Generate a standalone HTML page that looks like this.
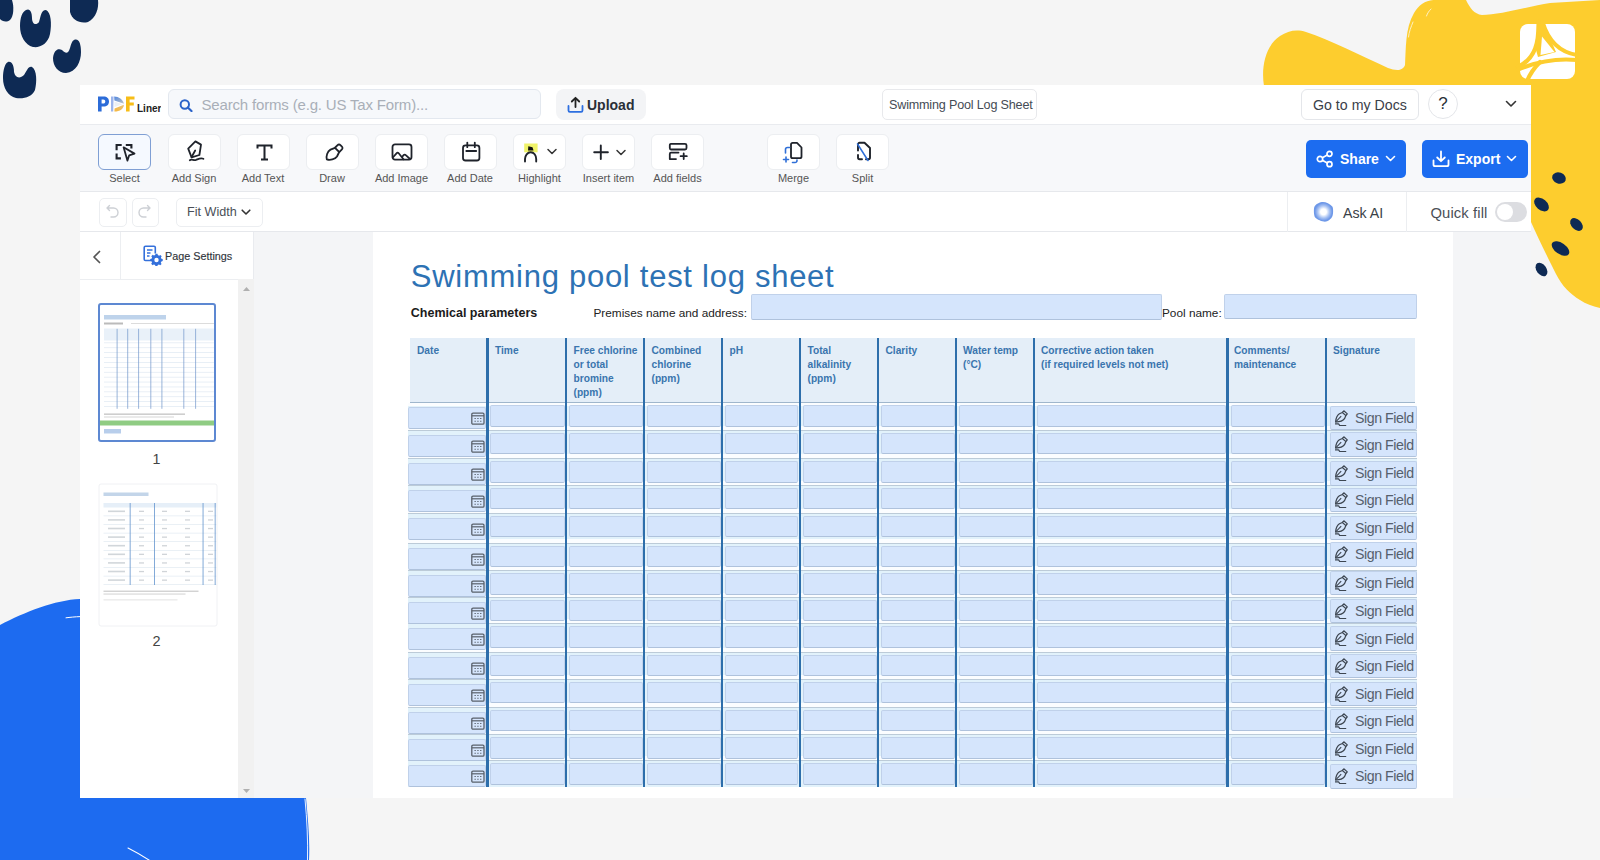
<!DOCTYPE html><html><head><meta charset="utf-8"><style>
*{box-sizing:border-box;margin:0;padding:0}
html,body{width:1600px;height:860px;overflow:hidden;background:#f5f5f5;font-family:"Liberation Sans",sans-serif;color:#333}
.abs{position:absolute}
#app{position:absolute;left:80px;top:85px;width:1451px;height:713px;background:#f4f5f7;overflow:hidden}
#hdr{position:absolute;left:0;top:0;width:1451px;height:40px;background:#fff;border-bottom:1px solid #e9ebef}
#tb{position:absolute;left:0;top:40px;width:1451px;height:67px;background:#f7f8fa;border-bottom:1px solid #e6e8ec}
#bar2{position:absolute;left:0;top:107px;width:1451px;height:40px;background:#fff;border-bottom:1px solid #e6e8ec}
#side{position:absolute;left:0;top:147px;width:174px;height:566px;background:#fff;border-right:1px solid #e9ebef}
#page{position:absolute;left:293px;top:147px;width:1080px;height:566px;background:#fff}
.btn svg{margin-top:-1px}
.btn{position:absolute;top:9px;width:53px;height:36px;background:#fff;border:1px solid #eceef1;border-radius:6px}
.pg{position:absolute;line-height:1;white-space:nowrap}
.fld{position:absolute;background:#d5e5fc;border:1px solid #c0d1ea;border-bottom-color:#afc2dc;border-radius:2px}
.hd{position:absolute;font-size:10.2px;font-weight:700;color:#3a75ae;line-height:14px;white-space:nowrap}
.lbl{position:absolute;top:47px;font-size:11px;color:#555;text-align:center;width:80px}
</style></head><body><svg class="abs" style="left:0;top:0" width="1600" height="860" viewBox="0 0 1600 860">
<g fill="#0e2a54">
<path d="M0 0 L12 0 C14 6 14 16 10 20 C6 23 2 21 0 19 Z"/>
<path d="M26 10 C30 8 32 12 32 18 C32 24 36 26 39 22 C41 16 41 10 46 10 C51 12 52 24 50 34 C48 44 40 48 33 47 C25 45 20 36 20 26 C20 18 22 12 26 10 Z"/>
<path d="M70 0 L98 0 C99 8 96 18 88 22 C80 24 72 20 70 12 Z"/>
<path d="M74 40 C79 38 81 44 81 52 C81 62 76 72 66 73 C58 73 53 66 53 58 C54 50 58 48 62 50 C66 54 68 54 70 48 C71 44 72 41 74 40 Z"/>
<path d="M8 62 C12 61 14 66 14 72 C15 78 20 79 24 75 C27 71 28 66 32 67 C37 70 37 82 35 90 C32 97 24 99 16 98 C8 96 3 88 3 78 C3 70 5 63 8 62 Z"/>
</g>
<path fill="#fdcd2e" d="M1264 86 C1261 68 1265 46 1280 36 C1288 31 1296 29 1306 32 C1330 40 1362 56 1388 68 C1396 71 1403 71 1405 65 C1406 50 1405 28 1414 13 C1420 3 1428 -1 1440 0 L1466 0 C1470 8 1474 14 1482 15 C1500 15 1530 6 1550 3 L1600 0 L1600 308 C1592 306 1586 304 1580 300 C1570 294 1562 286 1556 274 C1548 258 1538 238 1531 222 L1531 86 Z"/>
<rect x="1520" y="24" width="55" height="55" rx="8" fill="#fff"/>
<g fill="none" stroke="#fff8df" stroke-width="1" stroke-linecap="round" opacity="0.85"><path d="M1413 22 C1411 27 1409 32 1408.5 37"/><path d="M1431 9 C1429 11 1427.5 13 1426.5 16"/></g>
<g fill="none" stroke="#fdcd2e" stroke-width="4.2" stroke-linecap="round">
<path d="M1538.5 21 C1539 42 1536 58 1518 67"/>
<path d="M1542.5 22 C1548 40 1558 52 1577 55"/>
<path d="M1518 69.5 C1536 62 1556 58 1577 60"/>
<path d="M1540 62 C1534 68 1530 74 1527 81"/>
</g>
<path fill="#fdcd2e" d="M1537 24 L1544 24 L1556 52 L1538 57 L1536 50 Z"/>
<path fill="#fff" d="M1542 36.5 L1554.5 52 L1540.5 55 Z"/>
<g fill="#0e2a54">
<ellipse cx="1559" cy="178" rx="7" ry="5.5" transform="rotate(20 1559 178)"/>
<ellipse cx="1541.5" cy="204.5" rx="8.5" ry="5.5" transform="rotate(40 1541.5 204.5)"/>
<ellipse cx="1576.5" cy="224.5" rx="7.5" ry="5" transform="rotate(45 1576.5 224.5)"/>
<ellipse cx="1560.5" cy="248.5" rx="10" ry="5.5" transform="rotate(35 1560.5 248.5)"/>
<ellipse cx="1541.5" cy="269.5" rx="7.5" ry="5" transform="rotate(55 1541.5 269.5)"/>
</g>
<path fill="#1d6bf0" d="M0 625 C25 612 55 600 80 599 L80 798 L306 798 C308 820 310 840 309 860 L0 860 Z"/>
<g fill="none" stroke="#fff" stroke-linecap="round"><path d="M66 617.8 C70 617.3 75 616.8 80 616.6" stroke-width="1"/><path d="M305 799 C307 820 308 840 307.5 860" stroke-width="0.9"/><path d="M128 848 C138 853 146 858 152 862" stroke-width="1.1"/></g>
</svg>
<div id="app">
<div id="hdr">
<svg class="abs" style="left:17px;top:10px" width="64" height="20" viewBox="0 0 64 20">
<defs><linearGradient id="lgD1" x1="0" y1="0" x2="1" y2="1"><stop offset="0" stop-color="#4f86e0"/><stop offset="1" stop-color="#c2c6c4"/></linearGradient><linearGradient id="lgD2" x1="1" y1="0" x2="0" y2="1"><stop offset="0" stop-color="#e8c27a"/><stop offset="1" stop-color="#f6b73c"/></linearGradient></defs>
<path fill="#2c6cd8" d="M1 1.5 H6.5 C10 1.5 12 3.5 12 6.5 C12 9.5 10 11.5 6.5 11.5 H4.6 V16.5 H1 Z M4.6 4.5 V8.6 H6.2 C7.6 8.6 8.3 7.8 8.3 6.5 C8.3 5.3 7.6 4.5 6.2 4.5 Z"/>
<path fill="#9db5ec" d="M14 1.5 H16.6 L16.2 16.5 H14 Z"/>
<path fill="url(#lgD1)" d="M17.2 1.5 C22 1.8 25.5 4 27 8.8 L17.4 5.5 Z"/>
<path fill="#c9d3e0" d="M17.4 6.5 L25.5 9.2 L17.4 12 Z" opacity="0.35"/>
<path fill="url(#lgD2)" d="M17.4 16.6 L17.6 13.6 L26.9 9.8 C26.6 13.8 23 16.6 17.4 16.6 Z"/>
<path fill="#f7bd17" d="M29 1.5 H37.5 V4.5 H32.6 V7.6 H36.8 V10.5 H32.6 V16.5 H29 Z"/>
<text x="40" y="16.6" font-family="Liberation Sans" font-weight="700" font-size="10" fill="#222">Liner</text>
</svg>
<div class="abs" style="left:88px;top:4px;width:373px;height:30px;background:#f6f8fb;border:1px solid #e3e8ef;border-radius:6px"></div>
<svg class="abs" style="left:99px;top:14px" width="15" height="13" viewBox="0 0 15 13"><circle cx="5.8" cy="5.5" r="4.2" fill="none" stroke="#2a62c9" stroke-width="2"/><path d="M8.8 8.5 L12.5 12" stroke="#2a62c9" stroke-width="2.2" stroke-linecap="round"/></svg>
<div class="abs" style="left:121.5px;top:11px;font-size:15px;letter-spacing:-0.17px;color:#a9afb8;white-space:nowrap">Search forms (e.g. US Tax Form)...</div>
<div class="abs" style="left:476px;top:4px;width:90px;height:31px;background:#f3f4f6;border-radius:8px"></div>
<svg class="abs" style="left:487px;top:11px" width="17" height="17" viewBox="0 0 17 17"><path d="M8.5 11 V2 M4.8 5.5 L8.5 1.8 L12.2 5.5" fill="none" stroke="#222" stroke-width="1.8" stroke-linecap="round" stroke-linejoin="round"/><path d="M1.5 10 V14.5 C1.5 15.3 2 15.8 2.8 15.8 H14.2 C15 15.8 15.5 15.3 15.5 14.5 V10" fill="none" stroke="#2d6fe0" stroke-width="1.8" stroke-linecap="round"/></svg>
<div class="abs" style="left:507px;top:12px;font-size:14px;font-weight:700;color:#2a2f38;white-space:nowrap">Upload</div>
<div class="abs" style="left:802px;top:4px;width:155px;height:31px;background:#fff;border:1px solid #e8e9ec;border-radius:5px"></div>
<div class="abs" style="left:809px;top:13px;font-size:12.6px;letter-spacing:-0.18px;color:#454b54;white-space:nowrap">Swimming Pool Log Sheet</div>
<div class="abs" style="left:1221px;top:4px;width:118px;height:31px;background:#fff;border:1px solid #e4e6ea;border-radius:6px"></div>
<div class="abs" style="left:1233px;top:12px;font-size:14.2px;color:#3a4049;white-space:nowrap">Go to my Docs</div>
<div class="abs" style="left:1348px;top:4px;width:30px;height:30px;background:#fff;border:1px solid #e4e6ea;border-radius:50%"></div>
<div class="abs" style="left:1348px;top:9px;width:30px;text-align:center;font-size:17px;color:#2a2f38">?</div>
<svg class="abs" style="left:1425px;top:15px" width="12" height="8" viewBox="0 0 12 8"><path d="M1.5 1.5 L6 6 L10.5 1.5" fill="none" stroke="#333" stroke-width="1.6" stroke-linecap="round" stroke-linejoin="round"/></svg>
</div>
<div id="tb">
<div class="btn" style="left:18px;background:#f5f9ff;border:1px solid #7f9fd4"><svg class="abs" style="left:16px;top:9px" width="21" height="20" viewBox="0 0 21 20"><path d="M1.6 7.2 V2 H6.7 M10.8 2 H16.4 V5.6 M1.6 10.5 V15.4 H5.9" fill="none" stroke="#1f232b" stroke-width="2.1"/><path d="M8.6 4.3 L19.5 10.6 L14.2 12.3 L12.4 17.6 Z" fill="none" stroke="#1f232b" stroke-width="1.8" stroke-linecap="round" stroke-linejoin="round"/></div>
<div class="lbl" style="left:4.5px">Select</div>
<div class="btn" style="left:87.5px;"><svg class="abs" style="left:17px;top:6px" width="20" height="22" viewBox="0 0 20 22"><path d="M9.4 1.4 L15 4.6 L13.4 15 L5.6 17.4 L2.2 8.6 Z" fill="none" stroke="#1f232b" stroke-width="1.8" stroke-linecap="round" stroke-linejoin="round"/><path d="M5.6 17 L9.2 10.5" fill="none" stroke="#1f232b" stroke-width="1.8" stroke-linecap="round" stroke-linejoin="round"/><path d="M3.8 20.2 C6 18.6 7.5 21 10 20 C12.5 19 14.5 17.5 17.4 18.8" fill="none" stroke="#1f232b" stroke-width="1.8" stroke-linecap="round" stroke-linejoin="round"/></svg></div>
<div class="lbl" style="left:74.0px">Add Sign</div>
<div class="btn" style="left:156.5px;"><svg class="abs" style="left:18px;top:10px" width="17" height="17" viewBox="0 0 17 17"><path d="M1.5 4.5 V1.5 H15.5 V4.5 M8.5 1.5 V15.5 M5 15.5 H12" fill="none" stroke="#1f232b" stroke-width="2"/></svg></div>
<div class="lbl" style="left:143.0px">Add Text</div>
<div class="btn" style="left:225.5px;"><svg class="abs" style="left:17px;top:9px" width="20" height="19" viewBox="0 0 20 19"><path d="M11.2 4.5 L13.6 2.1 C14.4 1.3 15.6 1.3 16.4 2.1 L17.9 3.6 C18.7 4.4 18.7 5.6 17.9 6.4 L15.5 8.8" fill="none" stroke="#1f232b" stroke-width="1.8" stroke-linecap="round" stroke-linejoin="round"/><path d="M11 4.8 L15.2 9 L13 13.5 C11 16.5 6 17.5 2.8 16.4 C2 13.2 3.2 8.5 6.5 6.6 Z" fill="none" stroke="#1f232b" stroke-width="1.8" stroke-linecap="round" stroke-linejoin="round"/></svg></div>
<div class="lbl" style="left:212.0px">Draw</div>
<div class="btn" style="left:295px;"><svg class="abs" style="left:15px;top:9px" width="22" height="19" viewBox="0 0 22 19"><rect x="1.5" y="1.4" width="19" height="15.2" rx="2.5" fill="none" stroke="#1f232b" stroke-width="1.8" stroke-linecap="round" stroke-linejoin="round"/><path d="M1.8 14.5 L5.5 10.3 C6.2 9.5 7 9.5 7.7 10.3 L12.5 16.2 M11 14 L12.6 12.2 C13.3 11.4 14.1 11.4 14.8 12.2 L19 16" fill="none" stroke="#1f232b" stroke-width="1.8" stroke-linecap="round" stroke-linejoin="round"/></svg></div>
<div class="lbl" style="left:281.5px">Add Image</div>
<div class="btn" style="left:363.5px;"><svg class="abs" style="left:15px;top:6.3px" width="23" height="23" viewBox="0 0 23 23"><rect x="3" y="5.4" width="16.4" height="15.1" rx="2.5" fill="none" stroke="#1f232b" stroke-width="1.8" stroke-linecap="round" stroke-linejoin="round"/><path d="M6.3 11 H16.2 M7.3 2.6 V7.2 M14.8 2.6 V7.2" fill="none" stroke="#1f232b" stroke-width="1.8" stroke-linecap="round" stroke-linejoin="round"/></svg></div>
<div class="lbl" style="left:350.0px">Add Date</div>
<div class="btn" style="left:433px;"><svg class="abs" style="left:8px;top:8px" width="40" height="21" viewBox="0 0 40 21"><rect x="2.2" y="1.5" width="13.4" height="8.8" fill="#f0f36a"/><path d="M6 8.4 L6.3 4.3 L10.5 5.2 L11.5 8.4 Z" fill="#111"/><path d="M3 19.5 V17 C3 13.5 5.5 10.2 8.7 10.2 C12 10.2 14.2 13.5 14.2 17 V19.5" fill="none" stroke="#1f232b" stroke-width="1.9" stroke-linecap="round"/><path d="M26 7.5 L30 11.5 L34 7.5" fill="none" stroke="#333" stroke-width="1.5" stroke-linecap="round" stroke-linejoin="round"/></svg></div>
<div class="lbl" style="left:419.5px">Highlight</div>
<div class="btn" style="left:502px;"><svg class="abs" style="left:9px;top:9px" width="40" height="19" viewBox="0 0 40 19"><path d="M8.8 2.4 V16.1 M2.2 9.25 H15.9" fill="none" stroke="#1f232b" stroke-width="1.9" stroke-linecap="round"/><path d="M25 7.5 L29 11.5 L33 7.5" fill="none" stroke="#333" stroke-width="1.5" stroke-linecap="round" stroke-linejoin="round"/></svg></div>
<div class="lbl" style="left:488.5px">Insert item</div>
<div class="btn" style="left:571px;"><svg class="abs" style="left:16px;top:8px" width="21" height="20" viewBox="0 0 21 20"><path d="M3 1.8 H17 C18 1.8 18.5 2.3 18.5 3.3 V6 C18.5 7 18 7.5 17 7.5 H3 C2 7.5 1.8 7 1.8 6 V3.3 C1.8 2.3 2 1.8 3 1.8 Z" fill="none" stroke="#1f232b" stroke-width="1.8" stroke-linecap="round" stroke-linejoin="round"/><path d="M10.5 10.6 H3 C2 10.6 1.8 11.1 1.8 12.1 V17.1 H8" fill="none" stroke="#1f232b" stroke-width="1.8" stroke-linecap="round" stroke-linejoin="round"/><path d="M15.7 11.4 V17 M12.6 14.2 H18.8" fill="none" stroke="#1f232b" stroke-width="1.8" stroke-linecap="round" stroke-linejoin="round"/></svg></div>
<div class="lbl" style="left:557.5px">Add fields</div>
<div class="btn" style="left:687px;"><svg class="abs" style="left:12px;top:7px" width="24" height="24" viewBox="0 0 24 24"><path d="M11 3.5 C11 2.5 11.6 1.8 12.6 1.8 H17 L21.5 6.5 V15.5 C21.5 16.5 20.9 17.2 19.9 17.2 H12.6 C11.6 17.2 11 16.5 11 15.5 Z" fill="none" stroke="#1f232b" stroke-width="1.8" stroke-linejoin="round"/><path d="M9.5 6.5 H7.5 C6.5 6.5 5.5 7 5.5 8.5 V12 M12.5 21.5 H15 C16 21.5 17.2 21 17 19" fill="none" stroke="#2f6fd8" stroke-width="1.6" stroke-linecap="round"/><path d="M6 16 V21 M3.5 18.5 H8.5" fill="none" stroke="#2f6fd8" stroke-width="1.6" stroke-linecap="round"/></svg></div>
<div class="lbl" style="left:673.5px">Merge</div>
<div class="btn" style="left:756px;"><svg class="abs" style="left:16.5px;top:7px" width="20" height="24" viewBox="0 0 20 24"><path d="M4 9.5 V3.5 C4 2.5 4.6 1.8 5.6 1.8 H10.5 L16 7 V16.5 C16 17.5 15.4 18.2 14.4 18.2 H12 M8 18.2 H5.6 C4.6 18.2 4 17.5 4 16.5 V14" fill="none" stroke="#1f232b" stroke-width="1.9" stroke-linecap="round" stroke-linejoin="round"/><path d="M3.5 3 L14 19.5" fill="none" stroke="#2f6fd8" stroke-width="1.5" stroke-linecap="round"/></svg></div>
<div class="lbl" style="left:742.5px">Split</div>
<div class="abs" style="left:1226px;top:15px;width:100px;height:38px;background:#1c6cf0;border-radius:5px"></div>
<svg class="abs" style="left:1236px;top:25px" width="18" height="18" viewBox="0 0 18 18"><circle cx="4" cy="9" r="2.7" fill="none" stroke="#fff" stroke-width="1.7"/><circle cx="13.5" cy="3.8" r="2.5" fill="none" stroke="#fff" stroke-width="1.7"/><circle cx="13.5" cy="14.2" r="2.5" fill="none" stroke="#fff" stroke-width="1.7"/><path d="M6.3 7.7 L11.3 5 M6.3 10.3 L11.3 13" stroke="#fff" stroke-width="1.7"/></svg>
<div class="abs" style="left:1260px;top:26px;font-size:14px;font-weight:700;color:#fff;white-space:nowrap">Share</div>
<svg class="abs" style="left:1305px;top:30px" width="11" height="8" viewBox="0 0 11 8"><path d="M1.5 1.5 L5.5 5.5 L9.5 1.5" fill="none" stroke="#fff" stroke-width="1.6" stroke-linecap="round" stroke-linejoin="round"/></svg>
<div class="abs" style="left:1342px;top:15px;width:106px;height:38px;background:#1c6cf0;border-radius:5px"></div>
<svg class="abs" style="left:1352px;top:25px" width="18" height="18" viewBox="0 0 18 18"><path d="M9 1.5 V11 M5.2 7.5 L9 11.2 L12.8 7.5" fill="none" stroke="#fff" stroke-width="1.8" stroke-linecap="round" stroke-linejoin="round"/><path d="M1.5 10.5 V14.5 C1.5 15.5 2 16.2 3 16.2 H15 C16 16.2 16.5 15.5 16.5 14.5 V10.5" fill="none" stroke="#fff" stroke-width="1.8" stroke-linecap="round"/></svg>
<div class="abs" style="left:1376px;top:26px;font-size:14px;font-weight:700;color:#fff;white-space:nowrap">Export</div>
<svg class="abs" style="left:1426px;top:30px" width="11" height="8" viewBox="0 0 11 8"><path d="M1.5 1.5 L5.5 5.5 L9.5 1.5" fill="none" stroke="#fff" stroke-width="1.6" stroke-linecap="round" stroke-linejoin="round"/></svg>
</div>
<div id="bar2">
<div class="abs" style="left:18.5px;top:5.5px;width:28px;height:29px;border:1px solid #eceef1;border-radius:5px"></div>
<svg class="abs" style="left:25px;top:12px" width="15" height="15" viewBox="0 0 15 15"><path d="M4.5 1.5 L2 4 L4.5 6.5 M2.5 4 H8.5 C11 4 13 6 13 8.5 C13 11 11 13 8.5 13 H6" fill="none" stroke="#cdd0d5" stroke-width="1.4" stroke-linecap="round" stroke-linejoin="round"/></svg>
<div class="abs" style="left:51.5px;top:5.5px;width:27px;height:29px;border:1px solid #eceef1;border-radius:5px"></div>
<svg class="abs" style="left:57px;top:12px" width="15" height="15" viewBox="0 0 15 15"><path d="M10.5 1.5 L13 4 L10.5 6.5 M12.5 4 H6.5 C4 4 2 6 2 8.5 C2 11 4 13 6.5 13 H9" fill="none" stroke="#cdd0d5" stroke-width="1.4" stroke-linecap="round" stroke-linejoin="round"/></svg>
<div class="abs" style="left:95.5px;top:5.5px;width:87px;height:29px;border:1px solid #eceef1;border-radius:5px"></div>
<div class="abs" style="left:107px;top:13px;font-size:12.6px;color:#4a4f57;white-space:nowrap">Fit Width</div>
<svg class="abs" style="left:161px;top:17px" width="10" height="7" viewBox="0 0 10 7"><path d="M1.2 1.2 L5 5 L8.8 1.2" fill="none" stroke="#333" stroke-width="1.6" stroke-linecap="round" stroke-linejoin="round"/></svg>
<div class="abs" style="left:1207px;top:0;width:1px;height:40px;background:#eceef1"></div>
<div class="abs" style="left:1326px;top:0;width:1px;height:40px;background:#eceef1"></div>
<svg class="abs" style="left:1232px;top:9px" width="22" height="22" viewBox="0 0 22 22"><defs><radialGradient id="aig" cx="0.5" cy="0.5" r="0.5"><stop offset="0.3" stop-color="#fff"/><stop offset="0.62" stop-color="#a9c3f3"/><stop offset="0.9" stop-color="#6e98e8"/></radialGradient></defs><path d="M11 1 C14 1 18 3 20.3 5.5 C21.5 7 21.3 13 20.5 15 C19.5 18 15.5 20.7 13 20.7 C10 20.7 5 18.5 3.2 16.5 C1.8 15 1.6 8 2.3 6 C3.5 3 8 1 11 1 Z" fill="url(#aig)"/></svg>
<div class="abs" style="left:1263px;top:13px;font-size:14.2px;color:#3a3f47;white-space:nowrap">Ask AI</div>
<div class="abs" style="left:1350.5px;top:13px;font-size:14.8px;letter-spacing:0.1px;color:#4a4f57;white-space:nowrap">Quick fill</div>
<div class="abs" style="left:1415px;top:10px;width:32px;height:20px;background:#dcdde1;border-radius:10px"></div>
<div class="abs" style="left:1417px;top:12px;width:16px;height:16px;background:#fff;border-radius:50%"></div>
</div>
<div id="side">
<div class="abs" style="left:0;top:47px;width:174px;height:1px;background:#eceef1"></div>
<div class="abs" style="left:40px;top:0;width:1px;height:47px;background:#eceef1"></div>
<svg class="abs" style="left:12px;top:18px" width="10" height="14" viewBox="0 0 10 14"><path d="M7.5 1.5 L2 7 L7.5 12.5" fill="none" stroke="#555" stroke-width="1.7" stroke-linecap="round" stroke-linejoin="round"/></svg>
<svg class="abs" style="left:63px;top:13px" width="20" height="21" viewBox="0 0 20 21"><path d="M8.5 15.5 H2.5 C1.8 15.5 1.2 15 1.2 14.2 V2.5 C1.2 1.8 1.8 1.2 2.5 1.2 H11 C11.7 1.2 12.3 1.8 12.3 2.5 V8.5" fill="none" stroke="#3470db" stroke-width="1.6"/><path d="M4 5 H9.5 M4 8 H7.5 M4 11 H6.5" stroke="#3470db" stroke-width="1.5"/><g transform="translate(13.5 15)"><path d="M-1 -5.2 H1 L1.3 -3.8 L2.6 -3.2 L3.8 -4 L5.2 -2.6 L4.4 -1.4 L4.9 -0.1 L6.2 0.2 V2.2 L4.9 2.5 L4.3 3.8 L5.1 5 L3.7 6.4 L2.5 5.6 L1.2 6.1 L0.9 7.4 H-1.1 L-1.4 6.1 L-2.7 5.5 L-3.9 6.3 L-5.3 4.9 L-4.5 3.7 L-5 2.4 L-6.3 2.1 V0.1 L-5 -0.2 L-4.4 -1.5 L-5.2 -2.7 L-3.8 -4.1 L-2.6 -3.3 L-1.3 -3.8 Z" fill="#3470db" transform="translate(0 -1.1)"/><circle cx="0" cy="0" r="2.2" fill="#fff"/></g></svg>
<div class="abs" style="left:85px;top:18px;font-size:10.8px;color:#30353c;white-space:nowrap;-webkit-text-stroke:0.15px #30353c">Page Settings</div>
<div class="abs" style="left:158px;top:47px;width:16px;height:519px;background:#f1f1f1"></div>
<svg class="abs" style="left:162.5px;top:55px" width="7" height="4" viewBox="0 0 7 4"><path d="M0 4 L3.5 0 L7 4 Z" fill="#b0b0b0"/></svg>
<svg class="abs" style="left:162.5px;top:557px" width="7" height="4" viewBox="0 0 7 4"><path d="M0 0 L3.5 4 L7 0 Z" fill="#b0b0b0"/></svg>
<svg class="abs" style="left:18px;top:71px" width="118" height="139" viewBox="-1 -1 118 139"><rect x="0" y="0" width="116" height="137" rx="2" fill="#fff" stroke="#5d88d2" stroke-width="2"/><rect x="5" y="11" width="62" height="4.5" fill="#a3c0e3" opacity="0.7"/><rect x="5" y="18.5" width="19" height="2" fill="#777" opacity="0.5"/><rect x="32" y="19" width="83" height="1" fill="#c4c4c4" opacity="0.6"/><rect x="5" y="24.5" width="110" height="12" fill="#e3edf7" opacity="0.8"/><rect x="5" y="38.5" width="110" height="0.7" fill="#dfe8f2"/><rect x="5" y="43.4" width="110" height="0.7" fill="#dfe8f2"/><rect x="5" y="48.3" width="110" height="0.7" fill="#dfe8f2"/><rect x="5" y="53.2" width="110" height="0.7" fill="#dfe8f2"/><rect x="5" y="58.1" width="110" height="0.7" fill="#dfe8f2"/><rect x="5" y="63.0" width="110" height="0.7" fill="#dfe8f2"/><rect x="5" y="67.9" width="110" height="0.7" fill="#dfe8f2"/><rect x="5" y="72.8" width="110" height="0.7" fill="#dfe8f2"/><rect x="5" y="77.7" width="110" height="0.7" fill="#dfe8f2"/><rect x="5" y="82.6" width="110" height="0.7" fill="#dfe8f2"/><rect x="5" y="87.5" width="110" height="0.7" fill="#dfe8f2"/><rect x="5" y="92.4" width="110" height="0.7" fill="#dfe8f2"/><rect x="5" y="97.3" width="110" height="0.7" fill="#dfe8f2"/><rect x="5" y="102.2" width="110" height="0.7" fill="#dfe8f2"/><rect x="17.6" y="24.8" width="1" height="80" fill="#7196cb" opacity="0.7"/><rect x="28.2" y="24.8" width="1" height="80" fill="#7196cb" opacity="0.7"/><rect x="39.1" y="24.8" width="1" height="80" fill="#7196cb" opacity="0.7"/><rect x="51.3" y="24.8" width="1" height="80" fill="#7196cb" opacity="0.7"/><rect x="62.4" y="24.8" width="1" height="80" fill="#7196cb" opacity="0.7"/><rect x="84.3" y="24.8" width="1" height="80" fill="#7196cb" opacity="0.7"/><rect x="96.1" y="24.8" width="1" height="80" fill="#7196cb" opacity="0.7"/><rect x="5" y="109.5" width="81" height="1.3" fill="#777" opacity="0.45"/><rect x="5" y="112.5" width="70" height="1" fill="#888" opacity="0.35"/><rect x="1" y="116.5" width="114" height="5" fill="#8fcc83"/><rect x="5" y="125" width="17" height="4.5" fill="#a6c2e6" opacity="0.8"/></svg>
<div class="abs" style="left:66.5px;top:219px;width:20px;text-align:center;font-size:14.2px;color:#444">1</div>
<svg class="abs" style="left:18px;top:251px" width="120" height="144" viewBox="-1 -1 120 144"><rect x="0" y="0" width="118" height="142" rx="2" fill="#fff" stroke="#f0f1f4" stroke-width="1"/><rect x="4.5" y="8.5" width="45" height="3.5" fill="#a9c3e0" opacity="0.7"/><rect x="4.5" y="19" width="113" height="4.5" fill="#e6eff8"/><rect x="4.5" y="31.6" width="113" height="0.6" fill="#dde6ef"/><rect x="9" y="26.5" width="17" height="1.6" fill="#9aa3ad" opacity="0.45"/><rect x="40" y="26.7" width="5" height="1.3" fill="#8a949e" opacity="0.4"/><rect x="63" y="26.7" width="5" height="1.3" fill="#8a949e" opacity="0.4"/><rect x="86" y="26.7" width="5" height="1.3" fill="#8a949e" opacity="0.4"/><rect x="109" y="26.7" width="5" height="1.3" fill="#8a949e" opacity="0.4"/><rect x="4.5" y="40.2" width="113" height="0.6" fill="#dde6ef"/><rect x="9" y="35.1" width="17" height="1.6" fill="#9aa3ad" opacity="0.45"/><rect x="40" y="35.3" width="5" height="1.3" fill="#8a949e" opacity="0.4"/><rect x="63" y="35.3" width="5" height="1.3" fill="#8a949e" opacity="0.4"/><rect x="86" y="35.3" width="5" height="1.3" fill="#8a949e" opacity="0.4"/><rect x="109" y="35.3" width="5" height="1.3" fill="#8a949e" opacity="0.4"/><rect x="4.5" y="48.8" width="113" height="0.6" fill="#dde6ef"/><rect x="9" y="43.7" width="17" height="1.6" fill="#9aa3ad" opacity="0.45"/><rect x="40" y="43.9" width="5" height="1.3" fill="#8a949e" opacity="0.4"/><rect x="63" y="43.9" width="5" height="1.3" fill="#8a949e" opacity="0.4"/><rect x="86" y="43.9" width="5" height="1.3" fill="#8a949e" opacity="0.4"/><rect x="109" y="43.9" width="5" height="1.3" fill="#8a949e" opacity="0.4"/><rect x="4.5" y="57.4" width="113" height="0.6" fill="#dde6ef"/><rect x="9" y="52.3" width="17" height="1.6" fill="#9aa3ad" opacity="0.45"/><rect x="40" y="52.5" width="5" height="1.3" fill="#8a949e" opacity="0.4"/><rect x="63" y="52.5" width="5" height="1.3" fill="#8a949e" opacity="0.4"/><rect x="86" y="52.5" width="5" height="1.3" fill="#8a949e" opacity="0.4"/><rect x="109" y="52.5" width="5" height="1.3" fill="#8a949e" opacity="0.4"/><rect x="4.5" y="66.0" width="113" height="0.6" fill="#dde6ef"/><rect x="9" y="60.9" width="17" height="1.6" fill="#9aa3ad" opacity="0.45"/><rect x="40" y="61.1" width="5" height="1.3" fill="#8a949e" opacity="0.4"/><rect x="63" y="61.1" width="5" height="1.3" fill="#8a949e" opacity="0.4"/><rect x="86" y="61.1" width="5" height="1.3" fill="#8a949e" opacity="0.4"/><rect x="109" y="61.1" width="5" height="1.3" fill="#8a949e" opacity="0.4"/><rect x="4.5" y="74.6" width="113" height="0.6" fill="#dde6ef"/><rect x="9" y="69.5" width="17" height="1.6" fill="#9aa3ad" opacity="0.45"/><rect x="40" y="69.7" width="5" height="1.3" fill="#8a949e" opacity="0.4"/><rect x="63" y="69.7" width="5" height="1.3" fill="#8a949e" opacity="0.4"/><rect x="86" y="69.7" width="5" height="1.3" fill="#8a949e" opacity="0.4"/><rect x="109" y="69.7" width="5" height="1.3" fill="#8a949e" opacity="0.4"/><rect x="4.5" y="83.2" width="113" height="0.6" fill="#dde6ef"/><rect x="9" y="78.1" width="17" height="1.6" fill="#9aa3ad" opacity="0.45"/><rect x="40" y="78.3" width="5" height="1.3" fill="#8a949e" opacity="0.4"/><rect x="63" y="78.3" width="5" height="1.3" fill="#8a949e" opacity="0.4"/><rect x="86" y="78.3" width="5" height="1.3" fill="#8a949e" opacity="0.4"/><rect x="109" y="78.3" width="5" height="1.3" fill="#8a949e" opacity="0.4"/><rect x="4.5" y="91.8" width="113" height="0.6" fill="#dde6ef"/><rect x="9" y="86.7" width="17" height="1.6" fill="#9aa3ad" opacity="0.45"/><rect x="40" y="86.9" width="5" height="1.3" fill="#8a949e" opacity="0.4"/><rect x="63" y="86.9" width="5" height="1.3" fill="#8a949e" opacity="0.4"/><rect x="86" y="86.9" width="5" height="1.3" fill="#8a949e" opacity="0.4"/><rect x="109" y="86.9" width="5" height="1.3" fill="#8a949e" opacity="0.4"/><rect x="4.5" y="100.4" width="113" height="0.6" fill="#dde6ef"/><rect x="9" y="95.3" width="17" height="1.6" fill="#9aa3ad" opacity="0.45"/><rect x="40" y="95.5" width="5" height="1.3" fill="#8a949e" opacity="0.4"/><rect x="63" y="95.5" width="5" height="1.3" fill="#8a949e" opacity="0.4"/><rect x="86" y="95.5" width="5" height="1.3" fill="#8a949e" opacity="0.4"/><rect x="109" y="95.5" width="5" height="1.3" fill="#8a949e" opacity="0.4"/><rect x="30.7" y="19" width="0.9" height="82" fill="#5d8fcb" opacity="0.85"/><rect x="55" y="19" width="0.9" height="82" fill="#5d8fcb" opacity="0.85"/><rect x="103.6" y="19" width="0.9" height="82" fill="#5d8fcb" opacity="0.85"/><rect x="115.7" y="19" width="0.9" height="82" fill="#5d8fcb" opacity="0.85"/><rect x="4.5" y="106.6" width="95" height="1.3" fill="#888" opacity="0.4"/><rect x="4.5" y="109.5" width="82" height="1.1" fill="#888" opacity="0.35"/><rect x="4.5" y="115.5" width="74" height="0.8" fill="#999" opacity="0.35"/></svg>
<div class="abs" style="left:66.5px;top:401px;width:20px;text-align:center;font-size:14.5px;color:#444">2</div>
</div>
<div id="page">
<div class="pg" style="left:37.8px;top:28.5px;font-size:31px;letter-spacing:0.73px;color:#2d72b4">Swimming pool test log sheet</div>
<div class="pg" style="left:37.8px;top:75px;font-size:12.5px;font-weight:700;color:#1b1b1b">Chemical parameters</div>
<div class="pg" style="left:220.5px;top:75.8px;font-size:11.8px;color:#222">Premises name and address:</div>
<div class="fld" style="left:378.0px;top:62.4px;width:411.0px;height:25.3px;"></div>
<div class="pg" style="left:789px;top:75.8px;font-size:11.8px;color:#222">Pool name:</div>
<div class="fld" style="left:851.3px;top:61.8px;width:192.7px;height:25.1px;"></div>
<div class="abs" style="left:37.0px;top:106.0px;width:1005.0px;height:64.5px;background:#e4eef8;border-bottom:1px solid #9fb6cc"></div>
<div class="abs" style="left:35.0px;top:170.5px;width:1009.0px;height:384.5px;background:#e2f2fb"></div>
<div class="abs" style="left:35.0px;top:171.0px;width:1009.0px;height:3.0px;background:#fbfdff"></div>
<div class="abs" style="left:35.0px;top:193.8px;width:1009.0px;height:4.0px;background:#fbfdff"></div>
<div class="abs" style="left:35.0px;top:197.8px;width:1009.0px;height:1.0px;background:#bccbd8"></div>
<div class="abs" style="left:35.0px;top:222.3px;width:1009.0px;height:4.0px;background:#fbfdff"></div>
<div class="abs" style="left:35.0px;top:226.3px;width:1009.0px;height:1.0px;background:#bccbd8"></div>
<div class="abs" style="left:35.0px;top:248.8px;width:1009.0px;height:4.0px;background:#fbfdff"></div>
<div class="abs" style="left:35.0px;top:252.8px;width:1009.0px;height:1.0px;background:#bccbd8"></div>
<div class="abs" style="left:35.0px;top:276.8px;width:1009.0px;height:4.0px;background:#fbfdff"></div>
<div class="abs" style="left:35.0px;top:280.8px;width:1009.0px;height:1.0px;background:#bccbd8"></div>
<div class="abs" style="left:35.0px;top:306.8px;width:1009.0px;height:4.0px;background:#fbfdff"></div>
<div class="abs" style="left:35.0px;top:310.8px;width:1009.0px;height:1.0px;background:#bccbd8"></div>
<div class="abs" style="left:35.0px;top:334.3px;width:1009.0px;height:4.0px;background:#fbfdff"></div>
<div class="abs" style="left:35.0px;top:338.3px;width:1009.0px;height:1.0px;background:#bccbd8"></div>
<div class="abs" style="left:35.0px;top:360.8px;width:1009.0px;height:4.0px;background:#fbfdff"></div>
<div class="abs" style="left:35.0px;top:364.8px;width:1009.0px;height:1.0px;background:#bccbd8"></div>
<div class="abs" style="left:35.0px;top:387.3px;width:1009.0px;height:4.0px;background:#fbfdff"></div>
<div class="abs" style="left:35.0px;top:391.3px;width:1009.0px;height:1.0px;background:#bccbd8"></div>
<div class="abs" style="left:35.0px;top:415.8px;width:1009.0px;height:4.0px;background:#fbfdff"></div>
<div class="abs" style="left:35.0px;top:419.8px;width:1009.0px;height:1.0px;background:#bccbd8"></div>
<div class="abs" style="left:35.0px;top:442.8px;width:1009.0px;height:4.0px;background:#fbfdff"></div>
<div class="abs" style="left:35.0px;top:446.8px;width:1009.0px;height:1.0px;background:#bccbd8"></div>
<div class="abs" style="left:35.0px;top:470.8px;width:1009.0px;height:4.0px;background:#fbfdff"></div>
<div class="abs" style="left:35.0px;top:474.8px;width:1009.0px;height:1.0px;background:#bccbd8"></div>
<div class="abs" style="left:35.0px;top:498.3px;width:1009.0px;height:4.0px;background:#fbfdff"></div>
<div class="abs" style="left:35.0px;top:502.3px;width:1009.0px;height:1.0px;background:#bccbd8"></div>
<div class="abs" style="left:35.0px;top:524.3px;width:1009.0px;height:4.0px;background:#fbfdff"></div>
<div class="abs" style="left:35.0px;top:528.3px;width:1009.0px;height:1.0px;background:#bccbd8"></div>
<div class="abs" style="left:35.0px;top:555.0px;width:1009.0px;height:2.0px;background:#fff"></div>
<div class="fld" style="left:35.0px;top:175.0px;width:78.0px;height:22.0px;"></div>
<svg class="abs" style="left:98px;top:180px" width="14" height="13" viewBox="0 0 14 13"><rect x="0.8" y="1.2" width="12.2" height="11" rx="1.2" fill="none" stroke="#59616b" stroke-width="1.3"/><path d="M0.8 3.8 H13" stroke="#59616b" stroke-width="1.2"/><path d="M3.5 6.5 h1.3 M6.3 6.5 h1.3 M9.1 6.5 h1.3 M3.5 9.2 h1.3 M6.3 9.2 h1.3 M9.1 9.2 h1.3" stroke="#59616b" stroke-width="1.1"/></svg>
<div class="fld" style="left:117.0px;top:173.0px;width:74.5px;height:21.5px;"></div>
<div class="fld" style="left:195.5px;top:173.0px;width:74.3px;height:21.5px;"></div>
<div class="fld" style="left:273.8px;top:173.0px;width:74.0px;height:21.5px;"></div>
<div class="fld" style="left:351.8px;top:173.0px;width:73.7px;height:21.5px;"></div>
<div class="fld" style="left:429.5px;top:173.0px;width:74.0px;height:21.5px;"></div>
<div class="fld" style="left:507.5px;top:173.0px;width:74.0px;height:21.5px;"></div>
<div class="fld" style="left:585.5px;top:173.0px;width:74.3px;height:21.5px;"></div>
<div class="fld" style="left:663.8px;top:173.0px;width:189.2px;height:21.5px;"></div>
<div class="fld" style="left:858.0px;top:173.0px;width:94.0px;height:21.5px;"></div>
<div class="fld" style="left:957.0px;top:173.6px;width:87.0px;height:24.5px;"></div>
<svg class="abs" style="left:960.5px;top:177.60000000000002px" width="14" height="17" viewBox="0 0 14 17"><path d="M1.6 12 C1.8 9 2.8 5.6 5.4 3.8 L8.4 2.5 L11.9 5.6 L10.5 8.7 C9 11 6 12 1.6 12 Z" fill="none" stroke="#3d4651" stroke-width="1.25" stroke-linejoin="round"/><path d="M8.3 2.3 L9.8 0.8 L13.3 3.9 L11.8 5.5" fill="none" stroke="#3d4651" stroke-width="1.2" stroke-linejoin="round"/><path d="M7.2 6.2 L2.2 11.4" stroke="#3d4651" stroke-width="1.1"/><path d="M1 13.8 H4.4 C5 13.8 5.3 15.5 6 15.5 H12.2" fill="none" stroke="#3d4651" stroke-width="1.2"/></svg>
<div class="pg" style="left:982px;top:178.9px;font-size:14.2px;letter-spacing:-0.45px;color:#56606d">Sign Field</div>
<div class="fld" style="left:35.0px;top:202.5px;width:78.0px;height:22.0px;"></div>
<svg class="abs" style="left:98px;top:207.5px" width="14" height="13" viewBox="0 0 14 13"><rect x="0.8" y="1.2" width="12.2" height="11" rx="1.2" fill="none" stroke="#59616b" stroke-width="1.3"/><path d="M0.8 3.8 H13" stroke="#59616b" stroke-width="1.2"/><path d="M3.5 6.5 h1.3 M6.3 6.5 h1.3 M9.1 6.5 h1.3 M3.5 9.2 h1.3 M6.3 9.2 h1.3 M9.1 9.2 h1.3" stroke="#59616b" stroke-width="1.1"/></svg>
<div class="fld" style="left:117.0px;top:200.5px;width:74.5px;height:21.5px;"></div>
<div class="fld" style="left:195.5px;top:200.5px;width:74.3px;height:21.5px;"></div>
<div class="fld" style="left:273.8px;top:200.5px;width:74.0px;height:21.5px;"></div>
<div class="fld" style="left:351.8px;top:200.5px;width:73.7px;height:21.5px;"></div>
<div class="fld" style="left:429.5px;top:200.5px;width:74.0px;height:21.5px;"></div>
<div class="fld" style="left:507.5px;top:200.5px;width:74.0px;height:21.5px;"></div>
<div class="fld" style="left:585.5px;top:200.5px;width:74.3px;height:21.5px;"></div>
<div class="fld" style="left:663.8px;top:200.5px;width:189.2px;height:21.5px;"></div>
<div class="fld" style="left:858.0px;top:200.5px;width:94.0px;height:21.5px;"></div>
<div class="fld" style="left:957.0px;top:200.2px;width:87.0px;height:24.5px;"></div>
<svg class="abs" style="left:960.5px;top:204.2px" width="14" height="17" viewBox="0 0 14 17"><path d="M1.6 12 C1.8 9 2.8 5.6 5.4 3.8 L8.4 2.5 L11.9 5.6 L10.5 8.7 C9 11 6 12 1.6 12 Z" fill="none" stroke="#3d4651" stroke-width="1.25" stroke-linejoin="round"/><path d="M8.3 2.3 L9.8 0.8 L13.3 3.9 L11.8 5.5" fill="none" stroke="#3d4651" stroke-width="1.2" stroke-linejoin="round"/><path d="M7.2 6.2 L2.2 11.4" stroke="#3d4651" stroke-width="1.1"/><path d="M1 13.8 H4.4 C5 13.8 5.3 15.5 6 15.5 H12.2" fill="none" stroke="#3d4651" stroke-width="1.2"/></svg>
<div class="pg" style="left:982px;top:205.5px;font-size:14.2px;letter-spacing:-0.45px;color:#56606d">Sign Field</div>
<div class="fld" style="left:35.0px;top:231.0px;width:78.0px;height:22.0px;"></div>
<svg class="abs" style="left:98px;top:236px" width="14" height="13" viewBox="0 0 14 13"><rect x="0.8" y="1.2" width="12.2" height="11" rx="1.2" fill="none" stroke="#59616b" stroke-width="1.3"/><path d="M0.8 3.8 H13" stroke="#59616b" stroke-width="1.2"/><path d="M3.5 6.5 h1.3 M6.3 6.5 h1.3 M9.1 6.5 h1.3 M3.5 9.2 h1.3 M6.3 9.2 h1.3 M9.1 9.2 h1.3" stroke="#59616b" stroke-width="1.1"/></svg>
<div class="fld" style="left:117.0px;top:229.0px;width:74.5px;height:21.5px;"></div>
<div class="fld" style="left:195.5px;top:229.0px;width:74.3px;height:21.5px;"></div>
<div class="fld" style="left:273.8px;top:229.0px;width:74.0px;height:21.5px;"></div>
<div class="fld" style="left:351.8px;top:229.0px;width:73.7px;height:21.5px;"></div>
<div class="fld" style="left:429.5px;top:229.0px;width:74.0px;height:21.5px;"></div>
<div class="fld" style="left:507.5px;top:229.0px;width:74.0px;height:21.5px;"></div>
<div class="fld" style="left:585.5px;top:229.0px;width:74.3px;height:21.5px;"></div>
<div class="fld" style="left:663.8px;top:229.0px;width:189.2px;height:21.5px;"></div>
<div class="fld" style="left:858.0px;top:229.0px;width:94.0px;height:21.5px;"></div>
<div class="fld" style="left:957.0px;top:229.0px;width:87.0px;height:24.5px;"></div>
<svg class="abs" style="left:960.5px;top:233px" width="14" height="17" viewBox="0 0 14 17"><path d="M1.6 12 C1.8 9 2.8 5.6 5.4 3.8 L8.4 2.5 L11.9 5.6 L10.5 8.7 C9 11 6 12 1.6 12 Z" fill="none" stroke="#3d4651" stroke-width="1.25" stroke-linejoin="round"/><path d="M8.3 2.3 L9.8 0.8 L13.3 3.9 L11.8 5.5" fill="none" stroke="#3d4651" stroke-width="1.2" stroke-linejoin="round"/><path d="M7.2 6.2 L2.2 11.4" stroke="#3d4651" stroke-width="1.1"/><path d="M1 13.8 H4.4 C5 13.8 5.3 15.5 6 15.5 H12.2" fill="none" stroke="#3d4651" stroke-width="1.2"/></svg>
<div class="pg" style="left:982px;top:234.3px;font-size:14.2px;letter-spacing:-0.45px;color:#56606d">Sign Field</div>
<div class="fld" style="left:35.0px;top:257.5px;width:78.0px;height:22.0px;"></div>
<svg class="abs" style="left:98px;top:262.5px" width="14" height="13" viewBox="0 0 14 13"><rect x="0.8" y="1.2" width="12.2" height="11" rx="1.2" fill="none" stroke="#59616b" stroke-width="1.3"/><path d="M0.8 3.8 H13" stroke="#59616b" stroke-width="1.2"/><path d="M3.5 6.5 h1.3 M6.3 6.5 h1.3 M9.1 6.5 h1.3 M3.5 9.2 h1.3 M6.3 9.2 h1.3 M9.1 9.2 h1.3" stroke="#59616b" stroke-width="1.1"/></svg>
<div class="fld" style="left:117.0px;top:255.5px;width:74.5px;height:21.5px;"></div>
<div class="fld" style="left:195.5px;top:255.5px;width:74.3px;height:21.5px;"></div>
<div class="fld" style="left:273.8px;top:255.5px;width:74.0px;height:21.5px;"></div>
<div class="fld" style="left:351.8px;top:255.5px;width:73.7px;height:21.5px;"></div>
<div class="fld" style="left:429.5px;top:255.5px;width:74.0px;height:21.5px;"></div>
<div class="fld" style="left:507.5px;top:255.5px;width:74.0px;height:21.5px;"></div>
<div class="fld" style="left:585.5px;top:255.5px;width:74.3px;height:21.5px;"></div>
<div class="fld" style="left:663.8px;top:255.5px;width:189.2px;height:21.5px;"></div>
<div class="fld" style="left:858.0px;top:255.5px;width:94.0px;height:21.5px;"></div>
<div class="fld" style="left:957.0px;top:255.5px;width:87.0px;height:24.5px;"></div>
<svg class="abs" style="left:960.5px;top:259.5px" width="14" height="17" viewBox="0 0 14 17"><path d="M1.6 12 C1.8 9 2.8 5.6 5.4 3.8 L8.4 2.5 L11.9 5.6 L10.5 8.7 C9 11 6 12 1.6 12 Z" fill="none" stroke="#3d4651" stroke-width="1.25" stroke-linejoin="round"/><path d="M8.3 2.3 L9.8 0.8 L13.3 3.9 L11.8 5.5" fill="none" stroke="#3d4651" stroke-width="1.2" stroke-linejoin="round"/><path d="M7.2 6.2 L2.2 11.4" stroke="#3d4651" stroke-width="1.1"/><path d="M1 13.8 H4.4 C5 13.8 5.3 15.5 6 15.5 H12.2" fill="none" stroke="#3d4651" stroke-width="1.2"/></svg>
<div class="pg" style="left:982px;top:260.8px;font-size:14.2px;letter-spacing:-0.45px;color:#56606d">Sign Field</div>
<div class="fld" style="left:35.0px;top:285.5px;width:78.0px;height:22.0px;"></div>
<svg class="abs" style="left:98px;top:290.5px" width="14" height="13" viewBox="0 0 14 13"><rect x="0.8" y="1.2" width="12.2" height="11" rx="1.2" fill="none" stroke="#59616b" stroke-width="1.3"/><path d="M0.8 3.8 H13" stroke="#59616b" stroke-width="1.2"/><path d="M3.5 6.5 h1.3 M6.3 6.5 h1.3 M9.1 6.5 h1.3 M3.5 9.2 h1.3 M6.3 9.2 h1.3 M9.1 9.2 h1.3" stroke="#59616b" stroke-width="1.1"/></svg>
<div class="fld" style="left:117.0px;top:283.5px;width:74.5px;height:21.5px;"></div>
<div class="fld" style="left:195.5px;top:283.5px;width:74.3px;height:21.5px;"></div>
<div class="fld" style="left:273.8px;top:283.5px;width:74.0px;height:21.5px;"></div>
<div class="fld" style="left:351.8px;top:283.5px;width:73.7px;height:21.5px;"></div>
<div class="fld" style="left:429.5px;top:283.5px;width:74.0px;height:21.5px;"></div>
<div class="fld" style="left:507.5px;top:283.5px;width:74.0px;height:21.5px;"></div>
<div class="fld" style="left:585.5px;top:283.5px;width:74.3px;height:21.5px;"></div>
<div class="fld" style="left:663.8px;top:283.5px;width:189.2px;height:21.5px;"></div>
<div class="fld" style="left:858.0px;top:283.5px;width:94.0px;height:21.5px;"></div>
<div class="fld" style="left:957.0px;top:283.5px;width:87.0px;height:24.5px;"></div>
<svg class="abs" style="left:960.5px;top:287.5px" width="14" height="17" viewBox="0 0 14 17"><path d="M1.6 12 C1.8 9 2.8 5.6 5.4 3.8 L8.4 2.5 L11.9 5.6 L10.5 8.7 C9 11 6 12 1.6 12 Z" fill="none" stroke="#3d4651" stroke-width="1.25" stroke-linejoin="round"/><path d="M8.3 2.3 L9.8 0.8 L13.3 3.9 L11.8 5.5" fill="none" stroke="#3d4651" stroke-width="1.2" stroke-linejoin="round"/><path d="M7.2 6.2 L2.2 11.4" stroke="#3d4651" stroke-width="1.1"/><path d="M1 13.8 H4.4 C5 13.8 5.3 15.5 6 15.5 H12.2" fill="none" stroke="#3d4651" stroke-width="1.2"/></svg>
<div class="pg" style="left:982px;top:288.8px;font-size:14.2px;letter-spacing:-0.45px;color:#56606d">Sign Field</div>
<div class="fld" style="left:35.0px;top:315.5px;width:78.0px;height:22.0px;"></div>
<svg class="abs" style="left:98px;top:320.5px" width="14" height="13" viewBox="0 0 14 13"><rect x="0.8" y="1.2" width="12.2" height="11" rx="1.2" fill="none" stroke="#59616b" stroke-width="1.3"/><path d="M0.8 3.8 H13" stroke="#59616b" stroke-width="1.2"/><path d="M3.5 6.5 h1.3 M6.3 6.5 h1.3 M9.1 6.5 h1.3 M3.5 9.2 h1.3 M6.3 9.2 h1.3 M9.1 9.2 h1.3" stroke="#59616b" stroke-width="1.1"/></svg>
<div class="fld" style="left:117.0px;top:313.5px;width:74.5px;height:21.5px;"></div>
<div class="fld" style="left:195.5px;top:313.5px;width:74.3px;height:21.5px;"></div>
<div class="fld" style="left:273.8px;top:313.5px;width:74.0px;height:21.5px;"></div>
<div class="fld" style="left:351.8px;top:313.5px;width:73.7px;height:21.5px;"></div>
<div class="fld" style="left:429.5px;top:313.5px;width:74.0px;height:21.5px;"></div>
<div class="fld" style="left:507.5px;top:313.5px;width:74.0px;height:21.5px;"></div>
<div class="fld" style="left:585.5px;top:313.5px;width:74.3px;height:21.5px;"></div>
<div class="fld" style="left:663.8px;top:313.5px;width:189.2px;height:21.5px;"></div>
<div class="fld" style="left:858.0px;top:313.5px;width:94.0px;height:21.5px;"></div>
<div class="fld" style="left:957.0px;top:310.0px;width:87.0px;height:24.5px;"></div>
<svg class="abs" style="left:960.5px;top:314px" width="14" height="17" viewBox="0 0 14 17"><path d="M1.6 12 C1.8 9 2.8 5.6 5.4 3.8 L8.4 2.5 L11.9 5.6 L10.5 8.7 C9 11 6 12 1.6 12 Z" fill="none" stroke="#3d4651" stroke-width="1.25" stroke-linejoin="round"/><path d="M8.3 2.3 L9.8 0.8 L13.3 3.9 L11.8 5.5" fill="none" stroke="#3d4651" stroke-width="1.2" stroke-linejoin="round"/><path d="M7.2 6.2 L2.2 11.4" stroke="#3d4651" stroke-width="1.1"/><path d="M1 13.8 H4.4 C5 13.8 5.3 15.5 6 15.5 H12.2" fill="none" stroke="#3d4651" stroke-width="1.2"/></svg>
<div class="pg" style="left:982px;top:315.3px;font-size:14.2px;letter-spacing:-0.45px;color:#56606d">Sign Field</div>
<div class="fld" style="left:35.0px;top:343.0px;width:78.0px;height:22.0px;"></div>
<svg class="abs" style="left:98px;top:348px" width="14" height="13" viewBox="0 0 14 13"><rect x="0.8" y="1.2" width="12.2" height="11" rx="1.2" fill="none" stroke="#59616b" stroke-width="1.3"/><path d="M0.8 3.8 H13" stroke="#59616b" stroke-width="1.2"/><path d="M3.5 6.5 h1.3 M6.3 6.5 h1.3 M9.1 6.5 h1.3 M3.5 9.2 h1.3 M6.3 9.2 h1.3 M9.1 9.2 h1.3" stroke="#59616b" stroke-width="1.1"/></svg>
<div class="fld" style="left:117.0px;top:341.0px;width:74.5px;height:21.5px;"></div>
<div class="fld" style="left:195.5px;top:341.0px;width:74.3px;height:21.5px;"></div>
<div class="fld" style="left:273.8px;top:341.0px;width:74.0px;height:21.5px;"></div>
<div class="fld" style="left:351.8px;top:341.0px;width:73.7px;height:21.5px;"></div>
<div class="fld" style="left:429.5px;top:341.0px;width:74.0px;height:21.5px;"></div>
<div class="fld" style="left:507.5px;top:341.0px;width:74.0px;height:21.5px;"></div>
<div class="fld" style="left:585.5px;top:341.0px;width:74.3px;height:21.5px;"></div>
<div class="fld" style="left:663.8px;top:341.0px;width:189.2px;height:21.5px;"></div>
<div class="fld" style="left:858.0px;top:341.0px;width:94.0px;height:21.5px;"></div>
<div class="fld" style="left:957.0px;top:338.6px;width:87.0px;height:24.5px;"></div>
<svg class="abs" style="left:960.5px;top:342.6px" width="14" height="17" viewBox="0 0 14 17"><path d="M1.6 12 C1.8 9 2.8 5.6 5.4 3.8 L8.4 2.5 L11.9 5.6 L10.5 8.7 C9 11 6 12 1.6 12 Z" fill="none" stroke="#3d4651" stroke-width="1.25" stroke-linejoin="round"/><path d="M8.3 2.3 L9.8 0.8 L13.3 3.9 L11.8 5.5" fill="none" stroke="#3d4651" stroke-width="1.2" stroke-linejoin="round"/><path d="M7.2 6.2 L2.2 11.4" stroke="#3d4651" stroke-width="1.1"/><path d="M1 13.8 H4.4 C5 13.8 5.3 15.5 6 15.5 H12.2" fill="none" stroke="#3d4651" stroke-width="1.2"/></svg>
<div class="pg" style="left:982px;top:343.9px;font-size:14.2px;letter-spacing:-0.45px;color:#56606d">Sign Field</div>
<div class="fld" style="left:35.0px;top:369.5px;width:78.0px;height:22.0px;"></div>
<svg class="abs" style="left:98px;top:374.5px" width="14" height="13" viewBox="0 0 14 13"><rect x="0.8" y="1.2" width="12.2" height="11" rx="1.2" fill="none" stroke="#59616b" stroke-width="1.3"/><path d="M0.8 3.8 H13" stroke="#59616b" stroke-width="1.2"/><path d="M3.5 6.5 h1.3 M6.3 6.5 h1.3 M9.1 6.5 h1.3 M3.5 9.2 h1.3 M6.3 9.2 h1.3 M9.1 9.2 h1.3" stroke="#59616b" stroke-width="1.1"/></svg>
<div class="fld" style="left:117.0px;top:367.5px;width:74.5px;height:21.5px;"></div>
<div class="fld" style="left:195.5px;top:367.5px;width:74.3px;height:21.5px;"></div>
<div class="fld" style="left:273.8px;top:367.5px;width:74.0px;height:21.5px;"></div>
<div class="fld" style="left:351.8px;top:367.5px;width:73.7px;height:21.5px;"></div>
<div class="fld" style="left:429.5px;top:367.5px;width:74.0px;height:21.5px;"></div>
<div class="fld" style="left:507.5px;top:367.5px;width:74.0px;height:21.5px;"></div>
<div class="fld" style="left:585.5px;top:367.5px;width:74.3px;height:21.5px;"></div>
<div class="fld" style="left:663.8px;top:367.5px;width:189.2px;height:21.5px;"></div>
<div class="fld" style="left:858.0px;top:367.5px;width:94.0px;height:21.5px;"></div>
<div class="fld" style="left:957.0px;top:366.6px;width:87.0px;height:24.5px;"></div>
<svg class="abs" style="left:960.5px;top:370.6px" width="14" height="17" viewBox="0 0 14 17"><path d="M1.6 12 C1.8 9 2.8 5.6 5.4 3.8 L8.4 2.5 L11.9 5.6 L10.5 8.7 C9 11 6 12 1.6 12 Z" fill="none" stroke="#3d4651" stroke-width="1.25" stroke-linejoin="round"/><path d="M8.3 2.3 L9.8 0.8 L13.3 3.9 L11.8 5.5" fill="none" stroke="#3d4651" stroke-width="1.2" stroke-linejoin="round"/><path d="M7.2 6.2 L2.2 11.4" stroke="#3d4651" stroke-width="1.1"/><path d="M1 13.8 H4.4 C5 13.8 5.3 15.5 6 15.5 H12.2" fill="none" stroke="#3d4651" stroke-width="1.2"/></svg>
<div class="pg" style="left:982px;top:371.9px;font-size:14.2px;letter-spacing:-0.45px;color:#56606d">Sign Field</div>
<div class="fld" style="left:35.0px;top:396.0px;width:78.0px;height:22.0px;"></div>
<svg class="abs" style="left:98px;top:401px" width="14" height="13" viewBox="0 0 14 13"><rect x="0.8" y="1.2" width="12.2" height="11" rx="1.2" fill="none" stroke="#59616b" stroke-width="1.3"/><path d="M0.8 3.8 H13" stroke="#59616b" stroke-width="1.2"/><path d="M3.5 6.5 h1.3 M6.3 6.5 h1.3 M9.1 6.5 h1.3 M3.5 9.2 h1.3 M6.3 9.2 h1.3 M9.1 9.2 h1.3" stroke="#59616b" stroke-width="1.1"/></svg>
<div class="fld" style="left:117.0px;top:394.0px;width:74.5px;height:21.5px;"></div>
<div class="fld" style="left:195.5px;top:394.0px;width:74.3px;height:21.5px;"></div>
<div class="fld" style="left:273.8px;top:394.0px;width:74.0px;height:21.5px;"></div>
<div class="fld" style="left:351.8px;top:394.0px;width:73.7px;height:21.5px;"></div>
<div class="fld" style="left:429.5px;top:394.0px;width:74.0px;height:21.5px;"></div>
<div class="fld" style="left:507.5px;top:394.0px;width:74.0px;height:21.5px;"></div>
<div class="fld" style="left:585.5px;top:394.0px;width:74.3px;height:21.5px;"></div>
<div class="fld" style="left:663.8px;top:394.0px;width:189.2px;height:21.5px;"></div>
<div class="fld" style="left:858.0px;top:394.0px;width:94.0px;height:21.5px;"></div>
<div class="fld" style="left:957.0px;top:394.2px;width:87.0px;height:24.5px;"></div>
<svg class="abs" style="left:960.5px;top:398.20000000000005px" width="14" height="17" viewBox="0 0 14 17"><path d="M1.6 12 C1.8 9 2.8 5.6 5.4 3.8 L8.4 2.5 L11.9 5.6 L10.5 8.7 C9 11 6 12 1.6 12 Z" fill="none" stroke="#3d4651" stroke-width="1.25" stroke-linejoin="round"/><path d="M8.3 2.3 L9.8 0.8 L13.3 3.9 L11.8 5.5" fill="none" stroke="#3d4651" stroke-width="1.2" stroke-linejoin="round"/><path d="M7.2 6.2 L2.2 11.4" stroke="#3d4651" stroke-width="1.1"/><path d="M1 13.8 H4.4 C5 13.8 5.3 15.5 6 15.5 H12.2" fill="none" stroke="#3d4651" stroke-width="1.2"/></svg>
<div class="pg" style="left:982px;top:399.5px;font-size:14.2px;letter-spacing:-0.45px;color:#56606d">Sign Field</div>
<div class="fld" style="left:35.0px;top:424.5px;width:78.0px;height:22.0px;"></div>
<svg class="abs" style="left:98px;top:429.5px" width="14" height="13" viewBox="0 0 14 13"><rect x="0.8" y="1.2" width="12.2" height="11" rx="1.2" fill="none" stroke="#59616b" stroke-width="1.3"/><path d="M0.8 3.8 H13" stroke="#59616b" stroke-width="1.2"/><path d="M3.5 6.5 h1.3 M6.3 6.5 h1.3 M9.1 6.5 h1.3 M3.5 9.2 h1.3 M6.3 9.2 h1.3 M9.1 9.2 h1.3" stroke="#59616b" stroke-width="1.1"/></svg>
<div class="fld" style="left:117.0px;top:422.5px;width:74.5px;height:21.5px;"></div>
<div class="fld" style="left:195.5px;top:422.5px;width:74.3px;height:21.5px;"></div>
<div class="fld" style="left:273.8px;top:422.5px;width:74.0px;height:21.5px;"></div>
<div class="fld" style="left:351.8px;top:422.5px;width:73.7px;height:21.5px;"></div>
<div class="fld" style="left:429.5px;top:422.5px;width:74.0px;height:21.5px;"></div>
<div class="fld" style="left:507.5px;top:422.5px;width:74.0px;height:21.5px;"></div>
<div class="fld" style="left:585.5px;top:422.5px;width:74.3px;height:21.5px;"></div>
<div class="fld" style="left:663.8px;top:422.5px;width:189.2px;height:21.5px;"></div>
<div class="fld" style="left:858.0px;top:422.5px;width:94.0px;height:21.5px;"></div>
<div class="fld" style="left:957.0px;top:421.6px;width:87.0px;height:24.5px;"></div>
<svg class="abs" style="left:960.5px;top:425.6px" width="14" height="17" viewBox="0 0 14 17"><path d="M1.6 12 C1.8 9 2.8 5.6 5.4 3.8 L8.4 2.5 L11.9 5.6 L10.5 8.7 C9 11 6 12 1.6 12 Z" fill="none" stroke="#3d4651" stroke-width="1.25" stroke-linejoin="round"/><path d="M8.3 2.3 L9.8 0.8 L13.3 3.9 L11.8 5.5" fill="none" stroke="#3d4651" stroke-width="1.2" stroke-linejoin="round"/><path d="M7.2 6.2 L2.2 11.4" stroke="#3d4651" stroke-width="1.1"/><path d="M1 13.8 H4.4 C5 13.8 5.3 15.5 6 15.5 H12.2" fill="none" stroke="#3d4651" stroke-width="1.2"/></svg>
<div class="pg" style="left:982px;top:426.9px;font-size:14.2px;letter-spacing:-0.45px;color:#56606d">Sign Field</div>
<div class="fld" style="left:35.0px;top:451.5px;width:78.0px;height:22.0px;"></div>
<svg class="abs" style="left:98px;top:456.5px" width="14" height="13" viewBox="0 0 14 13"><rect x="0.8" y="1.2" width="12.2" height="11" rx="1.2" fill="none" stroke="#59616b" stroke-width="1.3"/><path d="M0.8 3.8 H13" stroke="#59616b" stroke-width="1.2"/><path d="M3.5 6.5 h1.3 M6.3 6.5 h1.3 M9.1 6.5 h1.3 M3.5 9.2 h1.3 M6.3 9.2 h1.3 M9.1 9.2 h1.3" stroke="#59616b" stroke-width="1.1"/></svg>
<div class="fld" style="left:117.0px;top:449.5px;width:74.5px;height:21.5px;"></div>
<div class="fld" style="left:195.5px;top:449.5px;width:74.3px;height:21.5px;"></div>
<div class="fld" style="left:273.8px;top:449.5px;width:74.0px;height:21.5px;"></div>
<div class="fld" style="left:351.8px;top:449.5px;width:73.7px;height:21.5px;"></div>
<div class="fld" style="left:429.5px;top:449.5px;width:74.0px;height:21.5px;"></div>
<div class="fld" style="left:507.5px;top:449.5px;width:74.0px;height:21.5px;"></div>
<div class="fld" style="left:585.5px;top:449.5px;width:74.3px;height:21.5px;"></div>
<div class="fld" style="left:663.8px;top:449.5px;width:189.2px;height:21.5px;"></div>
<div class="fld" style="left:858.0px;top:449.5px;width:94.0px;height:21.5px;"></div>
<div class="fld" style="left:957.0px;top:449.7px;width:87.0px;height:24.5px;"></div>
<svg class="abs" style="left:960.5px;top:453.70000000000005px" width="14" height="17" viewBox="0 0 14 17"><path d="M1.6 12 C1.8 9 2.8 5.6 5.4 3.8 L8.4 2.5 L11.9 5.6 L10.5 8.7 C9 11 6 12 1.6 12 Z" fill="none" stroke="#3d4651" stroke-width="1.25" stroke-linejoin="round"/><path d="M8.3 2.3 L9.8 0.8 L13.3 3.9 L11.8 5.5" fill="none" stroke="#3d4651" stroke-width="1.2" stroke-linejoin="round"/><path d="M7.2 6.2 L2.2 11.4" stroke="#3d4651" stroke-width="1.1"/><path d="M1 13.8 H4.4 C5 13.8 5.3 15.5 6 15.5 H12.2" fill="none" stroke="#3d4651" stroke-width="1.2"/></svg>
<div class="pg" style="left:982px;top:455.0px;font-size:14.2px;letter-spacing:-0.45px;color:#56606d">Sign Field</div>
<div class="fld" style="left:35.0px;top:479.5px;width:78.0px;height:22.0px;"></div>
<svg class="abs" style="left:98px;top:484.5px" width="14" height="13" viewBox="0 0 14 13"><rect x="0.8" y="1.2" width="12.2" height="11" rx="1.2" fill="none" stroke="#59616b" stroke-width="1.3"/><path d="M0.8 3.8 H13" stroke="#59616b" stroke-width="1.2"/><path d="M3.5 6.5 h1.3 M6.3 6.5 h1.3 M9.1 6.5 h1.3 M3.5 9.2 h1.3 M6.3 9.2 h1.3 M9.1 9.2 h1.3" stroke="#59616b" stroke-width="1.1"/></svg>
<div class="fld" style="left:117.0px;top:477.5px;width:74.5px;height:21.5px;"></div>
<div class="fld" style="left:195.5px;top:477.5px;width:74.3px;height:21.5px;"></div>
<div class="fld" style="left:273.8px;top:477.5px;width:74.0px;height:21.5px;"></div>
<div class="fld" style="left:351.8px;top:477.5px;width:73.7px;height:21.5px;"></div>
<div class="fld" style="left:429.5px;top:477.5px;width:74.0px;height:21.5px;"></div>
<div class="fld" style="left:507.5px;top:477.5px;width:74.0px;height:21.5px;"></div>
<div class="fld" style="left:585.5px;top:477.5px;width:74.3px;height:21.5px;"></div>
<div class="fld" style="left:663.8px;top:477.5px;width:189.2px;height:21.5px;"></div>
<div class="fld" style="left:858.0px;top:477.5px;width:94.0px;height:21.5px;"></div>
<div class="fld" style="left:957.0px;top:476.6px;width:87.0px;height:24.5px;"></div>
<svg class="abs" style="left:960.5px;top:480.6px" width="14" height="17" viewBox="0 0 14 17"><path d="M1.6 12 C1.8 9 2.8 5.6 5.4 3.8 L8.4 2.5 L11.9 5.6 L10.5 8.7 C9 11 6 12 1.6 12 Z" fill="none" stroke="#3d4651" stroke-width="1.25" stroke-linejoin="round"/><path d="M8.3 2.3 L9.8 0.8 L13.3 3.9 L11.8 5.5" fill="none" stroke="#3d4651" stroke-width="1.2" stroke-linejoin="round"/><path d="M7.2 6.2 L2.2 11.4" stroke="#3d4651" stroke-width="1.1"/><path d="M1 13.8 H4.4 C5 13.8 5.3 15.5 6 15.5 H12.2" fill="none" stroke="#3d4651" stroke-width="1.2"/></svg>
<div class="pg" style="left:982px;top:481.9px;font-size:14.2px;letter-spacing:-0.45px;color:#56606d">Sign Field</div>
<div class="fld" style="left:35.0px;top:507.0px;width:78.0px;height:22.0px;"></div>
<svg class="abs" style="left:98px;top:512px" width="14" height="13" viewBox="0 0 14 13"><rect x="0.8" y="1.2" width="12.2" height="11" rx="1.2" fill="none" stroke="#59616b" stroke-width="1.3"/><path d="M0.8 3.8 H13" stroke="#59616b" stroke-width="1.2"/><path d="M3.5 6.5 h1.3 M6.3 6.5 h1.3 M9.1 6.5 h1.3 M3.5 9.2 h1.3 M6.3 9.2 h1.3 M9.1 9.2 h1.3" stroke="#59616b" stroke-width="1.1"/></svg>
<div class="fld" style="left:117.0px;top:505.0px;width:74.5px;height:21.5px;"></div>
<div class="fld" style="left:195.5px;top:505.0px;width:74.3px;height:21.5px;"></div>
<div class="fld" style="left:273.8px;top:505.0px;width:74.0px;height:21.5px;"></div>
<div class="fld" style="left:351.8px;top:505.0px;width:73.7px;height:21.5px;"></div>
<div class="fld" style="left:429.5px;top:505.0px;width:74.0px;height:21.5px;"></div>
<div class="fld" style="left:507.5px;top:505.0px;width:74.0px;height:21.5px;"></div>
<div class="fld" style="left:585.5px;top:505.0px;width:74.3px;height:21.5px;"></div>
<div class="fld" style="left:663.8px;top:505.0px;width:189.2px;height:21.5px;"></div>
<div class="fld" style="left:858.0px;top:505.0px;width:94.0px;height:21.5px;"></div>
<div class="fld" style="left:957.0px;top:504.7px;width:87.0px;height:24.5px;"></div>
<svg class="abs" style="left:960.5px;top:508.70000000000005px" width="14" height="17" viewBox="0 0 14 17"><path d="M1.6 12 C1.8 9 2.8 5.6 5.4 3.8 L8.4 2.5 L11.9 5.6 L10.5 8.7 C9 11 6 12 1.6 12 Z" fill="none" stroke="#3d4651" stroke-width="1.25" stroke-linejoin="round"/><path d="M8.3 2.3 L9.8 0.8 L13.3 3.9 L11.8 5.5" fill="none" stroke="#3d4651" stroke-width="1.2" stroke-linejoin="round"/><path d="M7.2 6.2 L2.2 11.4" stroke="#3d4651" stroke-width="1.1"/><path d="M1 13.8 H4.4 C5 13.8 5.3 15.5 6 15.5 H12.2" fill="none" stroke="#3d4651" stroke-width="1.2"/></svg>
<div class="pg" style="left:982px;top:510.0px;font-size:14.2px;letter-spacing:-0.45px;color:#56606d">Sign Field</div>
<div class="fld" style="left:35.0px;top:533.0px;width:78.0px;height:22.0px;"></div>
<svg class="abs" style="left:98px;top:538px" width="14" height="13" viewBox="0 0 14 13"><rect x="0.8" y="1.2" width="12.2" height="11" rx="1.2" fill="none" stroke="#59616b" stroke-width="1.3"/><path d="M0.8 3.8 H13" stroke="#59616b" stroke-width="1.2"/><path d="M3.5 6.5 h1.3 M6.3 6.5 h1.3 M9.1 6.5 h1.3 M3.5 9.2 h1.3 M6.3 9.2 h1.3 M9.1 9.2 h1.3" stroke="#59616b" stroke-width="1.1"/></svg>
<div class="fld" style="left:117.0px;top:531.0px;width:74.5px;height:21.5px;"></div>
<div class="fld" style="left:195.5px;top:531.0px;width:74.3px;height:21.5px;"></div>
<div class="fld" style="left:273.8px;top:531.0px;width:74.0px;height:21.5px;"></div>
<div class="fld" style="left:351.8px;top:531.0px;width:73.7px;height:21.5px;"></div>
<div class="fld" style="left:429.5px;top:531.0px;width:74.0px;height:21.5px;"></div>
<div class="fld" style="left:507.5px;top:531.0px;width:74.0px;height:21.5px;"></div>
<div class="fld" style="left:585.5px;top:531.0px;width:74.3px;height:21.5px;"></div>
<div class="fld" style="left:663.8px;top:531.0px;width:189.2px;height:21.5px;"></div>
<div class="fld" style="left:858.0px;top:531.0px;width:94.0px;height:21.5px;"></div>
<div class="fld" style="left:957.0px;top:532.0px;width:87.0px;height:24.5px;"></div>
<svg class="abs" style="left:960.5px;top:536px" width="14" height="17" viewBox="0 0 14 17"><path d="M1.6 12 C1.8 9 2.8 5.6 5.4 3.8 L8.4 2.5 L11.9 5.6 L10.5 8.7 C9 11 6 12 1.6 12 Z" fill="none" stroke="#3d4651" stroke-width="1.25" stroke-linejoin="round"/><path d="M8.3 2.3 L9.8 0.8 L13.3 3.9 L11.8 5.5" fill="none" stroke="#3d4651" stroke-width="1.2" stroke-linejoin="round"/><path d="M7.2 6.2 L2.2 11.4" stroke="#3d4651" stroke-width="1.1"/><path d="M1 13.8 H4.4 C5 13.8 5.3 15.5 6 15.5 H12.2" fill="none" stroke="#3d4651" stroke-width="1.2"/></svg>
<div class="pg" style="left:982px;top:537.3px;font-size:14.2px;letter-spacing:-0.45px;color:#56606d">Sign Field</div>
<div class="abs" style="left:113.3px;top:106.0px;width:2.4px;height:449.0px;background:#2d6eab"></div>
<div class="abs" style="left:191.8px;top:106.0px;width:2.4px;height:449.0px;background:#2d6eab"></div>
<div class="abs" style="left:270.1px;top:106.0px;width:2.4px;height:449.0px;background:#2d6eab"></div>
<div class="abs" style="left:348.1px;top:106.0px;width:2.4px;height:449.0px;background:#2d6eab"></div>
<div class="abs" style="left:425.8px;top:106.0px;width:2.4px;height:449.0px;background:#2d6eab"></div>
<div class="abs" style="left:503.8px;top:106.0px;width:2.4px;height:449.0px;background:#2d6eab"></div>
<div class="abs" style="left:581.8px;top:106.0px;width:2.4px;height:449.0px;background:#2d6eab"></div>
<div class="abs" style="left:660.1px;top:106.0px;width:2.4px;height:449.0px;background:#2d6eab"></div>
<div class="abs" style="left:853.3px;top:106.0px;width:2.4px;height:449.0px;background:#2d6eab"></div>
<div class="abs" style="left:952.1px;top:106.0px;width:2.4px;height:449.0px;background:#2d6eab"></div>
<div class="hd" style="left:44px;top:111.5px">Date</div>
<div class="hd" style="left:122px;top:111.5px">Time</div>
<div class="hd" style="left:200.5px;top:111.5px">Free chlorine<br>or total<br>bromine<br>(ppm)</div>
<div class="hd" style="left:278.5px;top:111.5px">Combined<br>chlorine<br>(ppm)</div>
<div class="hd" style="left:356.5px;top:111.5px">pH</div>
<div class="hd" style="left:434.5px;top:111.5px">Total<br>alkalinity<br>(ppm)</div>
<div class="hd" style="left:512.5px;top:111.5px">Clarity</div>
<div class="hd" style="left:590px;top:111.5px">Water temp<br>(&deg;C)</div>
<div class="hd" style="left:668px;top:111.5px">Corrective action taken<br>(if required levels not met)</div>
<div class="hd" style="left:861px;top:111.5px">Comments/<br>maintenance</div>
<div class="hd" style="left:960px;top:111.5px">Signature</div>
</div>
</div></body></html>
